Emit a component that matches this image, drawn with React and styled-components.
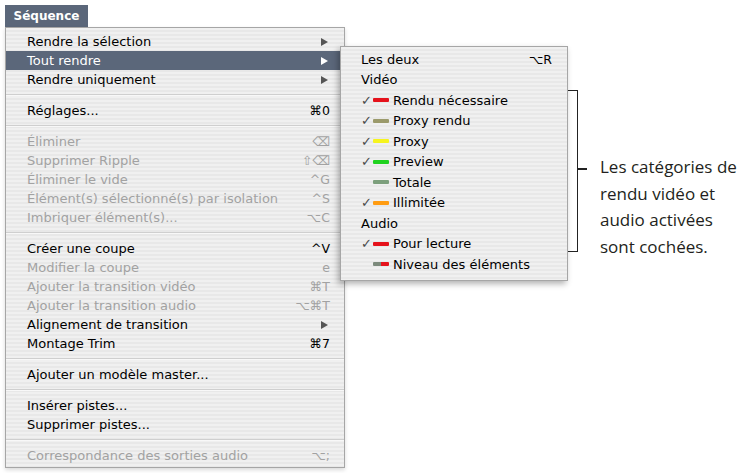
import React from 'react'
import styled, { createGlobalStyle } from 'styled-components'

const GlobalStyle = createGlobalStyle`
  html, body {
    margin: 0;
    padding: 0;
    background: #fff;
  }
  body {
    font-family: "DejaVu Sans", "Liberation Sans", sans-serif;
  }
`

const mainItems = [
  { label: 'Rendre la sélection', arrow: true },
  { label: 'Tout rendre', arrow: true, active: true },
  { label: 'Rendre uniquement', arrow: true },
  { sep: true },
  { label: 'Réglages...', key: '⌘0' },
  { sep: true },
  { label: 'Éliminer', key: '⌫', off: true },
  { label: 'Supprimer Ripple', key: '⇧⌫', off: true },
  { label: 'Éliminer le vide', key: '^G', off: true },
  { label: 'Élément(s) sélectionné(s) par isolation', key: '^S', off: true },
  { label: 'Imbriquer élément(s)...', key: '⌥C', off: true },
  { sep: true },
  { label: 'Créer une coupe', key: '^V' },
  { label: 'Modifier la coupe', key: 'e', off: true },
  { label: 'Ajouter la transition vidéo', key: '⌘T', off: true },
  { label: 'Ajouter la transition audio', key: '⌥⌘T', off: true },
  { label: 'Alignement de transition', arrow: true },
  { label: 'Montage Trim', key: '⌘7' },
  { sep: true },
  { label: 'Ajouter un modèle master...' },
  { sep: true },
  { label: 'Insérer pistes...' },
  { label: 'Supprimer pistes...' },
  { sep: true },
  { label: 'Correspondance des sorties audio', key: '⌥;', off: true },
]

const subItems = [
  { label: 'Les deux', key: '⌥R' },
  { label: 'Vidéo' },
  { label: 'Rendu nécessaire', check: true, swatch: '#e5121b' },
  { label: 'Proxy rendu', check: true, swatch: '#9b9a6b' },
  { label: 'Proxy', check: true, swatch: '#f6f41e' },
  { label: 'Preview', check: true, swatch: '#1fd21f' },
  { label: 'Totale', check: false, swatch: '#7c9f7c' },
  { label: 'Illimitée', check: true, swatch: '#ff9c12' },
  { label: 'Audio' },
  { label: 'Pour lecture', check: true, swatch: '#e5121b' },
  { label: 'Niveau des éléments', check: false, swatch: 'linear-gradient(to right, #7c8a7c 50%, #e5121b 50%)' },
]

function App() {
  return (
    <>
      <GlobalStyle />
      <Page>
        <MenuBar>
          <MenuTitle>Séquence</MenuTitle>
        </MenuBar>
        <MenuWrap>
          <MainMenu>
            {mainItems.map((it, i) =>
              it.sep ? (
                <Separator key={i} />
              ) : (
                <Item key={i} $off={it.off} $active={it.active}>
                  <span>{it.label}</span>
                  {it.arrow && <Arrow $active={it.active} />}
                  {it.key && <Key>{it.key}</Key>}
                </Item>
              )
            )}
          </MainMenu>

          <Flyout>
            <SubMenu>
              {subItems.map((it, i) => (
                <SubItem key={i}>
                  {it.swatch && (
                    <Mark>
                      <Check>{it.check ? '✓' : ''}</Check>
                      <Swatch $color={it.swatch} />
                    </Mark>
                  )}
                  <SubLabel>{it.label}</SubLabel>
                  {it.key && <Key>{it.key}</Key>}
                </SubItem>
              ))}
            </SubMenu>
            <Annotation>
              <Bracket />
              <Caption>
                Les catégories de
                <br />
                rendu vidéo et
                <br />
                audio activées
                <br />
                sont cochées.
              </Caption>
            </Annotation>
          </Flyout>
        </MenuWrap>
      </Page>
    </>
  )
}

export default App

const Page = styled.div`
  padding: 5px 0 0 5px;
  width: 751px;
  height: 473px;
  box-sizing: border-box;
  overflow: hidden;
`

const MenuBar = styled.div`
  display: flex;
  height: 22px;
`

const MenuTitle = styled.div`
  width: 83px;
  display: flex;
  align-items: center;
  justify-content: center;
  background: #5b677a;
  color: #fff;
  font-weight: bold;
  font-size: 12px;
`

const MenuWrap = styled.div`
  position: relative;
`

const stripes = `
  background-color: #ededed;
  background-image: repeating-linear-gradient(
    to bottom,
    #f0f0f0 0px,
    #f0f0f0 2px,
    #e8e8e8 2px,
    #e8e8e8 4px
  );
`

const MainMenu = styled.div`
  width: 340px;
  box-sizing: border-box;
  border: 1px solid #a6a6a6;
  padding: 4px 0 2px;
  ${stripes}
  box-shadow: 0 2px 4px rgba(0, 0, 0, 0.15);
  font-size: 13px;
`

const Item = styled.div`
  height: 19px;
  display: flex;
  align-items: center;
  justify-content: space-between;
  padding: 0 14px 0 21px;
  color: ${(p) => (p.$active ? '#fff' : p.$off ? '#a2a2a2' : '#000')};
  background: ${(p) => (p.$active ? '#5b677a' : 'transparent')};
  white-space: nowrap;
`

const Key = styled.span`
  font-size: 12.5px;
`

const Arrow = styled.span`
  width: 0;
  height: 0;
  border-top: 4.5px solid transparent;
  border-bottom: 4.5px solid transparent;
  border-left: 7px solid ${(p) => (p.$active ? '#fff' : '#555')};
  margin-right: 2px;
`

const Separator = styled.div`
  height: 12px;
  display: flex;
  align-items: center;
  &::before {
    content: '';
    flex: 1;
    height: 0;
    border-top: 1px solid #cfcfcf;
    border-bottom: 1px solid #f8f8f8;
  }
`

const Flyout = styled.div`
  position: absolute;
  left: 335px;
  top: 19px;
  display: flex;
  align-items: flex-start;
`

const SubMenu = styled.div`
  width: 228px;
  box-sizing: border-box;
  border: 1px solid #a6a6a6;
  padding: 2px 0 5px;
  ${stripes}
  box-shadow: -2px 3px 6px rgba(0, 0, 0, 0.3);
  font-size: 13px;
`

const SubItem = styled.div`
  height: 20.5px;
  display: flex;
  align-items: center;
  padding: 0 15px 0 20px;
  color: #000;
  white-space: nowrap;
`

const SubLabel = styled.span`
  flex: 1;
`

const Mark = styled.span`
  display: flex;
  align-items: center;
  width: 32px;
`

const Check = styled.span`
  width: 12px;
  font-size: 13px;
  font-weight: bold;
  color: #4a4a4a;
`

const Swatch = styled.span`
  width: 16px;
  height: 4px;
  border-radius: 1px;
  background: ${(p) => p.$color};
`

const Annotation = styled.div`
  display: flex;
  align-items: flex-start;
  margin-top: 44px;
`

const Bracket = styled.div`
  position: relative;
  width: 9px;
  height: 160px;
  border: 1.5px solid #222;
  border-left: none;
  &::after {
    content: '';
    position: absolute;
    left: 100%;
    top: 77px;
    width: 10px;
    height: 1.5px;
    background: #222;
  }
`

const Caption = styled.div`
  margin: 64px 0 0 22px;
  font-family: "Open Sans", "Liberation Sans", sans-serif;
  font-size: 17px;
  line-height: 26.5px;
  color: #231f20;
  white-space: nowrap;
`
